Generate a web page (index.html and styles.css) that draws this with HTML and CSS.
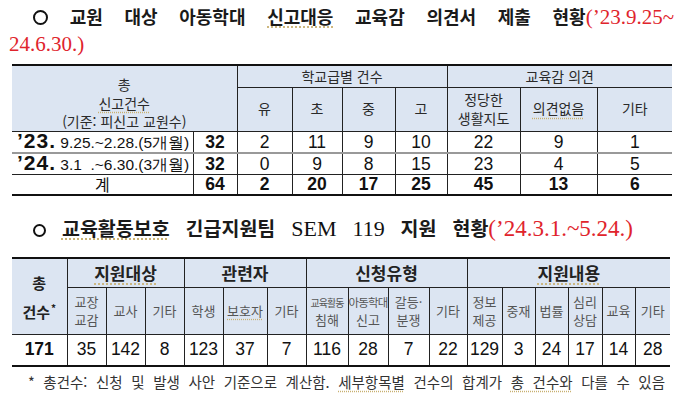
FILE: index.html
```html
<!DOCTYPE html>
<html lang="ko">
<head>
<meta charset="utf-8">
<link rel="stylesheet" href="styles.css">
</head>
<body>
<div class="page">
  <div class="title t1a"><span class="bullet"></span> 교원 대상 아동학대 <span class="ul">신고대응</span> 교육감 의견서 제출 현황<span class="red">(’23.9.25~</span></div>
  <div class="title t1b"><span class="red">24.6.30.)</span></div>

  <table class="tbl1">
    <colgroup>
      <col style="width:181px"><col style="width:44px"><col style="width:55px"><col style="width:50px"><col style="width:53px"><col style="width:52px"><col style="width:73px"><col style="width:77px"><col style="width:75px">
    </colgroup>
    <thead>
      <tr class="h1">
        <th colspan="2" rowspan="2" class="total"><div>총</div><div class="ul">신고건수</div><div>(기준: 피신고 교원수)</div></th>
        <th colspan="4" class="grp">학교급별 건수</th>
        <th colspan="3" class="grp">교육감 의견</th>
      </tr>
      <tr class="h2">
        <th>유</th><th>초</th><th>중</th><th>고</th>
        <th>정당한<br>생활지도</th><th><span class="ul">의견없음</span></th><th>기타</th>
      </tr>
    </thead>
    <tbody>
      <tr class="r1">
        <td class="period"><b class="yr">’23.</b> 9.25.~2.28.(5개월)</td><td class="b">32</td>
        <td>2</td><td>11</td><td>9</td><td>10</td><td>22</td><td>9</td><td>1</td>
      </tr>
      <tr class="r2">
        <td class="period"><b class="yr">’24.</b> 3.1 &nbsp;.~6.30.(3개월)</td><td class="b">32</td>
        <td>0</td><td>9</td><td>8</td><td>15</td><td>23</td><td>4</td><td>5</td>
      </tr>
      <tr class="sum">
        <td class="label">계</td><td>64</td>
        <td>2</td><td>20</td><td>17</td><td>25</td><td>45</td><td>13</td><td>6</td>
      </tr>
    </tbody>
  </table>

  <div class="title t2"><span class="bullet sm"></span> <span class="ul">교육활동보호</span> 긴급지원팀 <span class="serif">SEM 119</span> 지원 현황<span class="red big">(’24.3.1.~5.24.)</span></div>

  <table class="tbl2">
    <colgroup>
      <col style="width:55px"><col style="width:39px"><col style="width:39px"><col style="width:39px"><col style="width:39px"><col style="width:44px"><col style="width:39px"><col style="width:42px"><col style="width:40px"><col style="width:41px"><col style="width:38px"><col style="width:35px"><col style="width:33px"><col style="width:33px"><col style="width:34px"><col style="width:33px"><col style="width:35px">
    </colgroup>
    <thead>
      <tr class="h1">
        <th rowspan="2" class="tot"><div>총</div><div>건수<sup>*</sup></div></th>
        <th colspan="3"><span class="ul">지원대상</span></th>
        <th colspan="3">관련자</th>
        <th colspan="4">신청유형</th>
        <th colspan="6"><span class="ul">지원내용</span></th>
      </tr>
      <tr class="h2">
        <th>교장<br>교감</th><th>교사</th><th>기타</th>
        <th>학생</th><th><span class="ul">보호자</span></th><th>기타</th>
        <th><span class="tiny">교육활동</span><br>침해</th><th><span class="small">아동학대</span><br>신고</th><th>갈등·<br>분쟁</th><th>기타</th>
        <th>정보<br>제공</th><th>중재</th><th>법률</th><th>심리<br>상담</th><th>교육</th><th>기타</th>
      </tr>
    </thead>
    <tbody>
      <tr>
        <td class="b">171</td><td>35</td><td>142</td><td>8</td><td>123</td><td>37</td><td>7</td><td>116</td><td>28</td><td>7</td><td>22</td><td>129</td><td>3</td><td>24</td><td>17</td><td>14</td><td>28</td>
      </tr>
    </tbody>
  </table>

  <div class="note">* 총건수: 신청 및 발생 사안 기준으로 계산함. <span class="ul">세부항목별</span> 건수의 합계가 <span class="ul">총 건수와</span> 다를 수 있음</div>
</div>
</body>
</html>
```

FILE: styles.css
```css
* { box-sizing: border-box; }
html, body { margin: 0; padding: 0; background: #fff; }
body {
  width: 680px;
  height: 402px;
  overflow: hidden;
  font-family: "Noto Sans CJK KR", "Noto Sans", sans-serif;
  color: #111;
}
.page { padding: 0; }

.title {
  font-family: "Noto Sans CJK KR", sans-serif;
  font-weight: 700;
  font-size: 18px;
  color: #1a1a1a;
  white-space: nowrap;
}
.t1a {
  padding: 1px 6px 0 33px;
  height: 30px;
  line-height: 30px;
  text-align: justify;
  text-align-last: justify;
  white-space: normal;
}
.t1b {
  padding-left: 9px;
  height: 34px;
  line-height: 26px;
}
.bullet {
  display: inline-block;
  width: 15px;
  height: 15px;
  border: 2.5px solid #111;
  border-radius: 50%;
  vertical-align: -1px;
}
.bullet.sm { width: 13px; height: 13px; border-width: 2.2px; }
.red {
  font-family: "Liberation Serif", serif;
  font-weight: 400;
  font-size: 21px;
  color: #e0242c;
}
.red.big { font-size: 23px; }
.serif {
  font-family: "Liberation Serif", serif;
  font-weight: 400;
  font-size: 22px;
  color: #111;
}
.ul {
  text-decoration: underline dotted #c8b070;
  text-underline-offset: 3px;
}

table {
  border-collapse: collapse;
  table-layout: fixed;
  margin-left: 12px;
  font-family: "Liberation Sans", Arial, sans-serif;
}
th, td {
  padding: 0;
  text-align: center;
  vertical-align: middle;
  border: 1px solid #222;
}
th:first-child, td:first-child { border-left: none; }
tr > :last-child { border-right: none; }
thead tr:first-child th { border-top: 2px solid #111; }
tbody tr:last-child td { border-bottom: 2px solid #111; }
th {
  background: #dce5f2;
  font-family: "Noto Sans CJK KR", sans-serif;
  font-weight: 400;
  color: #2a2a2a;
}

/* table 1 */
.tbl1 { width: 660px; }
.tbl1 th { font-size: 14px; line-height: 18px; }
.tbl1 .h1 th { height: 22px; }
.tbl1 .h2 th { height: 43px; line-height: 19.5px; }
.tbl1 th.total { line-height: 18.5px; padding-top: 9px; }
.tbl1 td {
  font-size: 17.5px;
  height: 21px;
  line-height: 18px;
  color: #111;
}
.tbl1 .r1 td { border-bottom: 2px solid #999; }
.tbl1 .sum td { height: 21px; }
.tbl1 td.b, .tbl1 .sum td { font-weight: 700; }
.tbl1 td.period {
  text-align: left;
  padding-left: 5px;
  font-size: 15.5px;
  white-space: nowrap;
  border-right: 1px solid #222;
}
.tbl1 .yr { font-size: 21px; font-weight: 700; letter-spacing: 1px; }
.tbl1 .sum td.label {
  font-family: "Noto Sans CJK KR", sans-serif;
  font-weight: 400;
  font-size: 16px;
}

/* title 2 */
.t2 {
  margin-top: 18px;
  padding: 0 47px 0 33px;
  height: 43px;
  line-height: 28px;
  font-size: 19.5px;
  white-space: normal;
  text-align: justify;
  text-align-last: justify;
}

/* table 2 */
.tbl2 { width: 658px; }
.tbl2 .h1 th {
  height: 29px;
  font-weight: 700;
  font-size: 17px;
  color: #222;
}
.tbl2 .h1 th.tot { font-size: 15px; line-height: 25px; padding-top: 2px; }
.tbl2 .tot sup { font-size: 10px; vertical-align: 6px; margin-left: 1px; }
.tbl2 .h2 th {
  height: 47px;
  font-size: 13px;
  line-height: 17.5px;
  color: #555;
}
.tbl2 .h2 .tiny { font-size: 10px; letter-spacing: -1px; white-space: nowrap; }
.tbl2 .h2 .small { font-size: 11.5px; letter-spacing: -0.8px; white-space: nowrap; }
.tbl2 td {
  height: 32px;
  font-size: 17.5px;
  color: #111;
}
.tbl2 td.b { font-weight: 700; }

.note {
  margin: 5px 15px 0 28px;
  line-height: 20px;
  font-size: 14.5px;
  color: #333;
  text-align: justify;
  text-align-last: justify;
  white-space: nowrap;
}
```
